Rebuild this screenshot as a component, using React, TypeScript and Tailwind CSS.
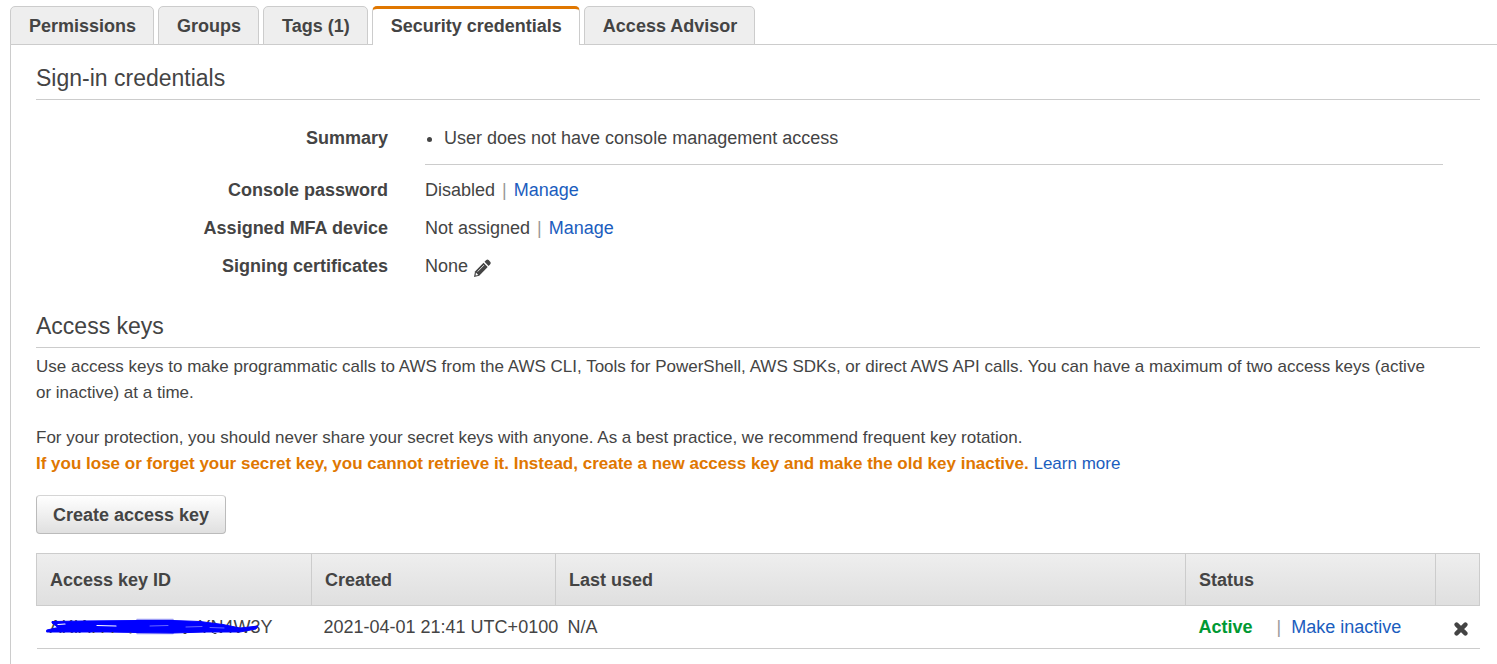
import React from "react";

const tabs = ["Permissions", "Groups", "Tags (1)", "Security credentials", "Access Advisor"];
const activeTab = "Security credentials";

function TabBar() {
  return (
    <div role="tablist" className="relative z-10 -mb-px flex gap-1">
      {tabs.map((tab) => (
        <button
          key={tab}
          type="button"
          role="tab"
          aria-selected={tab === activeTab}
          className={
            tab === activeTab
              ? "h-[39px] rounded-t-[5px] border-x border-t-3 border-x-[#ccc] border-t-[#e07700] bg-white pr-[17px] pb-0.5 pl-[18px] font-bold"
              : "h-[39px] rounded-t-[5px] border border-[#ccc] bg-[#eee] pr-[17px] pl-[18px] font-bold"
          }
        >
          {tab}
        </button>
      ))}
    </div>
  );
}

function Divider() {
  return <span className="px-[7px] text-[#999]">|</span>;
}

function TextLink({ children }: { children: React.ReactNode }) {
  return (
    <a href="#" className="text-[#1b5dbe] hover:underline">
      {children}
    </a>
  );
}

function Pencil() {
  return (
    <svg viewBox="0 0 17 18" className="h-[18px] w-[17px]" aria-hidden="true">
      <path d="M0 18L1 12.500L9.500 3.800L13.700 8L5.200 16.800Z" fill="currentColor" />
      <path d="M10.500 2.800L12.300 1Q13.400 0 14.600 1L16.200 2.700Q17.200 3.900 16.200 5.200L14.600 7Z" fill="currentColor" />
      <path d="M1.900 13.600L4.300 16L1.600 16.500Z" fill="#fff" />
      <path d="M3.600 12.600L10 6.100" stroke="#fff" strokeWidth="0.8" />
    </svg>
  );
}

function Cross() {
  return (
    <svg viewBox="0 0 14 14" className="size-3.5" fill="none" stroke="currentColor" strokeWidth="4.4" strokeLinecap="round" aria-hidden="true">
      <path d="M2.6 2.6l8.8 8.8M11.4 2.6l-8.8 8.8" />
    </svg>
  );
}

function Scribble() {
  return (
    <svg viewBox="0 0 214 18" className="absolute -left-1 top-1 h-[18px] w-[214px]" fill="none" strokeLinecap="round" strokeLinejoin="round" aria-hidden="true">
      <path d="M91 1.500H127M91 15.500H127" stroke="#9d9df5" strokeWidth="1.500" />
      <path
        d="M1 12L12 9.500L6 5V3.500L37 3L91 2.500L127 2.500L154 3.500L177 6.500L194 10L212 8L210 11L194 14L160 14L127 15L91 14.500L61 14L30 14L1 14Z"
        fill="#0000ff"
        stroke="#0000ff"
        strokeWidth="1"
      />
      <path d="M12 6.500L19 6M51 7.500L70 8" stroke="#fff" strokeWidth="1.200" />
      <path d="M104 8L122 7.500M140 9L156 8.500M164 9.500L178 10" stroke="#8080ff" strokeWidth="0.800" />
      <path d="M47 14.500H48M56 14.500H57M66 14.500H67M84 15H85M138 15.500H140M168 15.500H170" stroke="#444" strokeWidth="1" />
    </svg>
  );
}

function Field({ label, children }: { label: string; children: React.ReactNode }) {
  return (
    <>
      <dt className="text-right font-bold">{label}</dt>
      <dd className="flex items-center">{children}</dd>
    </>
  );
}

export default function App() {
  return (
    <div className="bg-white pt-1.5 pl-2.5 font-['Liberation_Sans',Arial,sans-serif] text-[18px] leading-[26px] text-[#444]">
      <TabBar />
      <main className="border-t border-l border-[#ccc] pt-4 pr-[17px] pb-[15px] pl-[25px]">
        <section>
          <h2 className="border-b border-[#ccc] pb-1 text-[23px] leading-[34px]">Sign-in credentials</h2>
          <dl className="mt-[25px] mr-[37px] grid grid-cols-[352px_1fr] gap-x-[37px] gap-y-3">
            <dt className="text-right font-bold">Summary</dt>
            <dd className="border-b border-[#ccc] pb-[13px]">
              <ul className="list-disc pl-[19px]">
                <li>User does not have console management access</li>
              </ul>
            </dd>
            <Field label="Console password">
              Disabled <Divider /> <TextLink>Manage</TextLink>
            </Field>
            <Field label="Assigned MFA device">
              Not assigned <Divider /> <TextLink>Manage</TextLink>
            </Field>
            <Field label="Signing certificates">
              None
              <button type="button" aria-label="Edit signing certificates" className="mt-1 ml-1.5">
                <Pencil />
              </button>
            </Field>
          </dl>
        </section>

        <section className="mt-[30px]">
          <h2 className="border-b border-[#ccc] pb-1 text-[23px] leading-[34px]">Access keys</h2>
          <div className="text-[17px]">
            <p className="mt-1.5">
              Use access keys to make programmatic calls to AWS from the AWS CLI, Tools for PowerShell, AWS SDKs, or direct AWS API calls. You can have a maximum of two access keys (active
              <br /> or inactive) at a time.
            </p>
            <p className="mt-[19px]">
              For your protection, you should never share your secret keys with anyone. As a best practice, we recommend frequent key rotation.
              <br />
              <strong className="text-[#e07700]">
                If you lose or forget your secret key, you cannot retrieve it. Instead, create a new access key and make the old key inactive.
              </strong>{" "}
              <TextLink>Learn more</TextLink>
            </p>
          </div>
          <button
            type="button"
            className="mt-[18px] block h-[39px] rounded-[4px] border border-[#bbb] border-t-[#d5d5d5] bg-linear-to-b from-white to-[#e0e0e0] px-4 font-bold"
          >
            Create access key
          </button>

          <table className="mt-[19px] w-full table-fixed border-collapse text-left">
            <colgroup>
              <col className="w-[275px]" />
              <col className="w-[244px]" />
              <col />
              <col className="w-[250px]" />
              <col className="w-11" />
            </colgroup>
            <thead>
              <tr className="h-[52px] bg-linear-to-b from-[#eee] to-[#dfdfdf]">
                <th className="border border-[#ccc] px-[13px]">Access key ID</th>
                <th className="border border-[#ccc] px-[13px]">Created</th>
                <th className="border border-[#ccc] px-[13px]">Last used</th>
                <th className="border border-[#ccc] px-[13px]">Status</th>
                <th className="border border-[#ccc]" aria-label="Actions" />
              </tr>
            </thead>
            <tbody>
              <tr className="h-[43px] border-b border-[#ccc]">
                <td className="px-[13px]">
                  <div className="relative flex w-[223px] justify-between">
                    <span>AKIA</span>
                    <span>YN4W3Y</span>
                    <Scribble />
                  </div>
                </td>
                <td className="pl-3 whitespace-nowrap">2021-04-01 21:41 UTC+0100</td>
                <td className="px-3">N/A</td>
                <td className="pl-[13px] whitespace-nowrap">
                  <strong className="text-[#093]">Active</strong>
                  <span className="pr-2.5 pl-6 text-[#999]">|</span>
                  <TextLink>Make inactive</TextLink>
                </td>
                <td className="pt-1 pl-[18px]">
                  <button type="button" aria-label="Delete access key" className="block">
                    <Cross />
                  </button>
                </td>
              </tr>
            </tbody>
          </table>
        </section>
      </main>
    </div>
  );
}
